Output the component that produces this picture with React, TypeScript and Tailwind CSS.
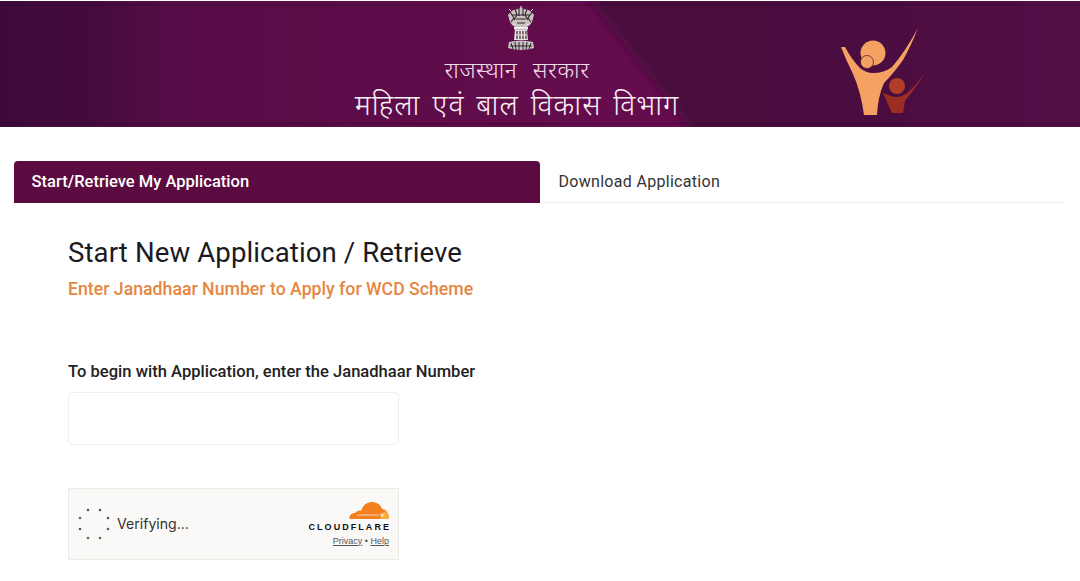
export default function App() {
  const dots: [number, number, string][] = [
    [88, 510, "#4d5a52"], [100, 510, "#4d5a52"], [80, 518, "#4f6a5a"], [108, 518, "#4d5a52"],
    [80, 529, "#4d5a52"], [108, 529, "#4f6a5a"], [88, 538, "#3f7a55"], [100, 538, "#3f7a55"],
  ];
  return (
    <div className="w-[1080px] h-[581px] overflow-hidden bg-white font-['Roboto',sans-serif]">
      <header className="relative mt-px h-[126px] overflow-hidden bg-[linear-gradient(90deg,#3d0b39_0%,#430b3c_8%,#560c47_16%,#5b0c48_30%,#630c4c_50%,#660c4e_65%)] flex flex-col items-center pr-[46px]">
        <svg viewBox="0 0 1080 126" className="absolute inset-0 w-full h-full" aria-hidden="true">
          <defs>
            <linearGradient id="rightBand" x1="0" x2="1" y1="0" y2="0">
              <stop offset="0" stopColor="#470b3c" />
              <stop offset="0.6" stopColor="#4c0b40" />
              <stop offset="1" stopColor="#540c46" />
            </linearGradient>
            <filter id="soft" x="-5%" y="-5%" width="110%" height="110%">
              <feGaussianBlur stdDeviation="5" />
            </filter>
          </defs>
          <polygon points="575,-20 1110,-20 1110,146 705,146" fill="url(#rightBand)" filter="url(#soft)" />
          <rect x="0" y="3" width="1080" height="1.5" fill="#2e0728" opacity="0.35" />
          <rect x="0" y="122" width="1080" height="1.5" fill="#2e0728" opacity="0.35" />
        </svg>
        <svg viewBox="0 0 30 46" className="relative ml-[8px] mt-[5px] w-[30px] h-[46px] shrink-0" aria-hidden="true">
          <path d="M2 9 Q6 3 12 3 Q15 0 18 3 Q24 3 28 9 L26 16 Q24 20 21 21 L9 21 Q6 20 4 16 Z" fill="#c8c2c0" />
          <path d="M4 6 L8 12 L5 16 M9 3 L11 9 L8 14 M13 2 L13 10 M17 2 L17 10 M21 3 L19 9 L22 14 M26 6 L22 12 L25 16 M6 9 L24 9 M10 13 L20 13 M11 17 L19 17" stroke="#32242a" strokeWidth="1.1" fill="none" />
          <path d="M3 3 L5 5 M27 3 L25 5 M15 0 V2 M7 18 L10 19 M23 18 L20 19" stroke="#e8e4e2" strokeWidth="1" />
          <rect x="8" y="21" width="14" height="2.5" fill="#efebe9" />
          <path d="M9 23.5 L21 23.5 L22 34 L8 34 Z" fill="#e6e2e0" />
          <path d="M11 25 V33 M14 25 V33 M17 25 V33 M20 25 V33" stroke="#3f2431" strokeWidth="1.2" />
          <path d="M9 29 H21" stroke="#efebe9" strokeWidth="1" />
          <path d="M3 36 Q15 33 27 36 L28 42 Q15 46 2 42 Z" fill="#c9c4c2" />
          <path d="M5 37 L7 43 M9 36 L10 44 M13 36 L13 44 M17 36 L17 44 M21 36 L20 44 M25 37 L23 43 M4 40 H26" stroke="#33242c" strokeWidth="1" />
        </svg>
        <div className="relative mt-[5px] text-[23px] leading-[30px] font-light text-[#ecdde6] tracking-[0.5px] [word-spacing:9px] whitespace-nowrap font-['Noto_Sans_Devanagari','Noto_Sans',sans-serif]">राजस्थान सरकार</div>
        <div className="relative mt-[2px] text-[28.5px] leading-[38px] font-[350] text-[#f8f0f4] tracking-[1px] [word-spacing:3.5px] whitespace-nowrap font-['Noto_Sans_Devanagari','Noto_Sans',sans-serif]">महिला एवं बाल विकास विभाग</div>
        <svg viewBox="820 10 120 115" className="absolute left-[820px] top-[9px] w-[120px] h-[115px]" aria-hidden="true">
          <path d="M883 93 L888 95 Q898 100 907 93 Q917 85 925 72 Q921 80 915 88 Q909 96 905 101 L903 113 L892 113 Z" fill="#9c2d22" />
          <circle cx="897" cy="86" r="8" fill="#b03d28" />
          <path d="M841 47 L845 47 Q852 60 860 68 Q866 73 873 73 Q884 73 892 67 Q905 52 918 28 Q911 46 903 60 Q893 74 884 83 Q878 96 877 115 L864 115 Q861 92 853 74 Q846 60 841 47 Z" fill="#f4a162" />
          <circle cx="873" cy="53" r="12.5" fill="#f4a162" />
          <circle cx="867" cy="62" r="6.5" fill="#f4a162" stroke="#5a2030" strokeWidth="0.8" />
        </svg>
      </header>

      <nav className="mt-[34px] ml-[14px] mr-[14px] flex h-[42px] border-b border-[#eeeeee] text-[16px]">
        <div className="w-[526px] h-[42px] rounded-t-[4px] bg-[#5c0b40] pl-[17.5px] flex items-center font-medium text-[16.55px] text-white">Start/Retrieve My Application</div>
        <div className="pl-[18.5px] flex items-center text-[#333333] tracking-[0.3px]">Download Application</div>
      </nav>

      <main className="ml-[68px] w-[331px]">
        <h1 className="mt-[32px] text-[27.6px] leading-[36px] font-[450] tracking-[0.1px] text-[#1b1b1f] whitespace-nowrap">Start New Application / Retrieve</h1>
        <h2 className="mt-[6px] text-[17.7px] leading-[24px] font-medium text-[#e58743] whitespace-nowrap">Enter Janadhaar Number to Apply for WCD Scheme</h2>
        <label className="block mt-[59px] text-[16.55px] leading-[24px] font-medium tracking-[0.02px] text-[#222222] whitespace-nowrap">To begin with Application, enter the Janadhaar Number</label>
        <input aria-label="Janadhaar Number" className="block mt-[8px] w-[331px] h-[53px] rounded-[5px] border border-[#eeeeee] bg-white" />
        <div className="mt-[43px] w-[331px] h-[72px] border border-[#ecebe8] bg-[#fbf9f7] flex items-center justify-between pl-[9px] pr-[9px]">
          <div className="flex items-center gap-[7px]">
            <svg viewBox="78 507 32 34" className="w-[32px] h-[34px]" aria-hidden="true">
              {dots.map(([x, y, c], i) => (
                <circle key={i} cx={x} cy={y} r="1.3" fill={c} />
              ))}
            </svg>
            <span className="text-[14.1px] text-[#333333] font-['Inter',sans-serif]">Verifying...</span>
          </div>
          <div className="flex flex-col items-end">
            <svg viewBox="0 0 40 18" className="w-[40px] h-[18px]" aria-hidden="true">
              <path d="M0.5 17 C0 13 3 11 6 11 C8 9 10 8 12 9 C14 2 19 0 23 0 C28 0 32 3 33 7 C37 7 40 11 40 17 Z" fill="#f38020" />
              <path d="M31 17 C32 12 34 10 36 9 C39 11 40 14 40 17 Z" fill="#faad3f" />
              <path d="M8 13 H30" stroke="#fde7d2" strokeWidth="0.8" />
              <path d="M33 11 V15 M31 13 H35" stroke="#fff4e6" strokeWidth="0.9" />
            </svg>
            <div className="mt-[2px] text-[9px] leading-[11px] font-bold tracking-[2.05px] mr-[-2px] text-[#111111] font-['Liberation_Sans',sans-serif]">CLOUDFLARE</div>
            <div className="mt-[3px] text-[9px] leading-[11px] text-[#555555] font-['Liberation_Sans',sans-serif]"><span className="underline">Privacy</span> • <span className="underline">Help</span></div>
          </div>
        </div>
      </main>
    </div>
  );
}
